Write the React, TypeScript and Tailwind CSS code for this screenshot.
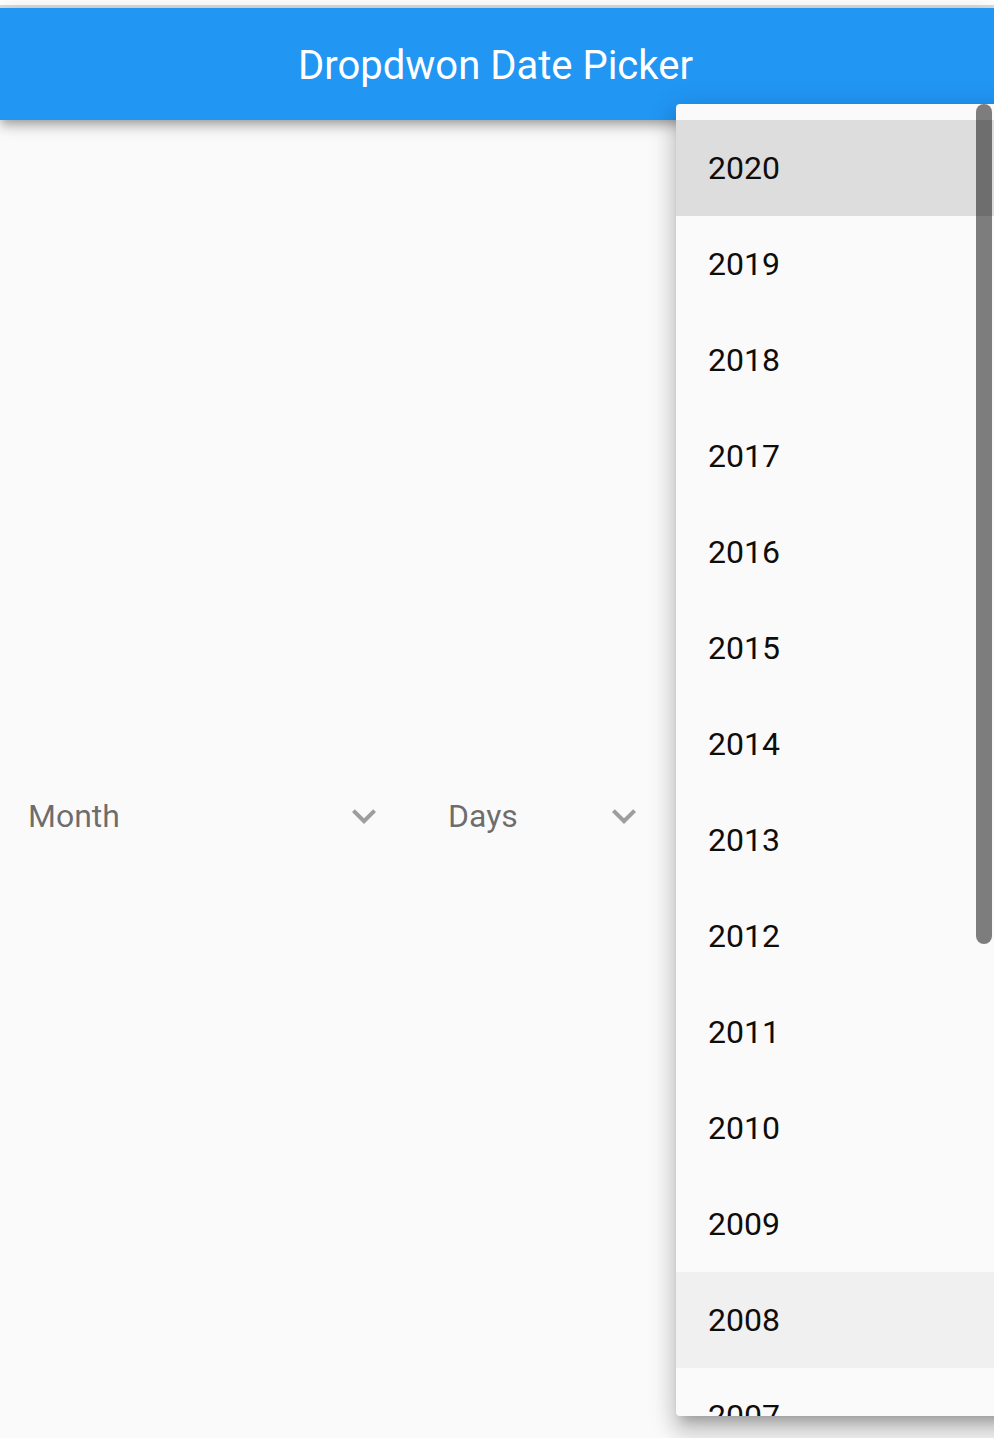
import React from 'react';

const YEARS = [2020, 2019, 2018, 2017, 2016, 2015, 2014, 2013, 2012, 2011, 2010, 2009, 2008, 2007];

const ExpandMore: React.FC = () => (
  <svg viewBox="0 0 24 24" className="w-[48px] h-[48px] shrink-0" fill="#9e9e9e">
    <path d="M16.59 8.59L12 13.17 7.41 8.59 6 10l6 6 6-6z" />
  </svg>
);

const Dropdown: React.FC<{ hint: string; className?: string }> = ({ hint, className }) => (
  <div className={`flex items-center h-[96px] ${className ?? ''}`}>
    <span className="flex-1 text-[32px] text-black/[0.58] leading-none">{hint}</span>
    <ExpandMore />
  </div>
);

export default function App() {
  return (
    <div className="relative w-[994px] h-[1438px] overflow-hidden bg-[#fafafa] font-['Roboto',sans-serif]">
      {/* status strip */}
      <div className="h-[5px] bg-white" />
      <div className="h-[3px] bg-[#dcdcdc]" />

      {/* app bar */}
      <header className="relative z-10 h-[112px] pt-[4px] pr-[3px] bg-[#2196f3] flex items-center justify-center text-white text-[40px] shadow-[0_4px_8px_-2px_rgba(0,0,0,0.2),0_8px_10px_0_rgba(0,0,0,0.14),0_2px_20px_0_rgba(0,0,0,0.12)]">
        Dropdwon Date Picker
      </header>

      {/* body */}
      <main className="pt-[648px] flex">
        <Dropdown hint="Month" className="ml-[28px] w-[360px]" />
        <Dropdown hint="Days" className="ml-[60px] w-[200px]" />
      </main>

      {/* year menu */}
      <div className="absolute z-20 left-[676px] top-[104px] w-[340px] h-[1312px] rounded-[4px] overflow-hidden bg-[#fafafa] shadow-[0_10px_10px_-6px_rgba(0,0,0,0.2),0_16px_20px_2px_rgba(0,0,0,0.14),0_6px_28px_4px_rgba(0,0,0,0.12)]">
        <ul className="py-[16px]">
          {YEARS.map((y) => (
            <li
              key={y}
              className={`h-[96px] flex items-center pl-[32px] text-[32px] leading-none text-[#0d0d0d] ${
                y === 2020 ? 'bg-[#dddddd]' : y === 2008 ? 'bg-[#f0f0f0]' : ''
              }`}
            >
              {y}
            </li>
          ))}
        </ul>
        <div className="absolute left-[300px] top-0 w-[16px] h-[840px] rounded-full bg-black/50" />
      </div>
    </div>
  );
}
